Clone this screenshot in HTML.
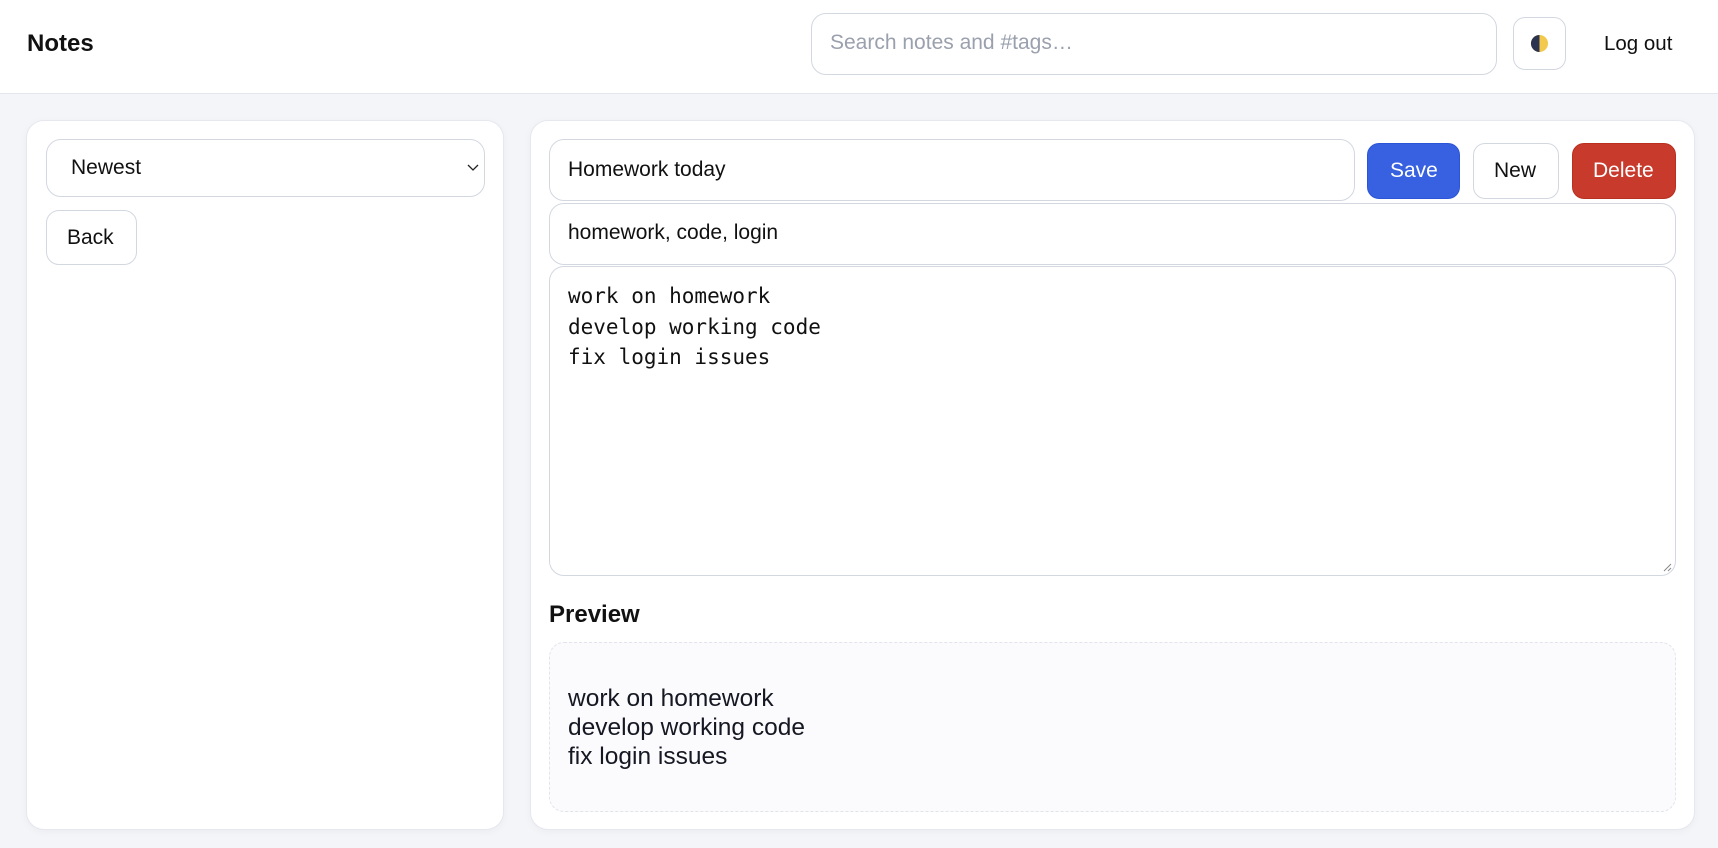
<!DOCTYPE html>
<html><head><meta charset="utf-8"><style>
*{box-sizing:border-box;margin:0;padding:0}
body{width:1718px;height:848px;background:#f4f5f9;font-family:"Liberation Sans",sans-serif;color:#111;position:relative;overflow:hidden}
.hdr{position:absolute;left:0;top:0;width:1718px;height:94px;background:#fff;border-bottom:1px solid #e3e6ee}
.abs{position:absolute}
.box{position:absolute;border:1.5px solid #d3d7e0;border-radius:15px;background:#fff}
.card{position:absolute;background:#fff;border:1px solid #e6e8ef;border-radius:18px;box-shadow:0 2px 8px rgba(0,0,0,.04)}
.t{position:absolute;white-space:nowrap}
</style></head><body>
<div class="hdr"></div>
<div class="t" style="left:27px;top:30px;font-size:24px;font-weight:bold">Notes</div>
<div class="box" style="left:811px;top:13px;width:686px;height:62px;"></div>
<div class="t" style="left:830px;top:31px;font-size:21px;color:#9aa0ad">Search notes and #tags…</div>
<div class="box" style="left:1513px;top:17px;width:53px;height:53px;border-radius:12px"></div>
<svg class="abs" style="left:1530px;top:34px" width="19" height="19" viewBox="0 0 20 20"><circle cx="10" cy="10" r="9" fill="#f2c94c"/><path d="M10 1a9 9 0 0 0 0 18z" fill="#2a3350"/></svg>
<div class="t" style="left:1604px;top:32px;font-size:20.5px">Log out</div>

<div class="card" style="left:26px;top:120px;width:478px;height:710px"></div>
<div class="box" style="left:46px;top:139px;width:439px;height:58px"></div>
<div class="t" style="left:71px;top:156px;font-size:21px">Newest</div>
<svg class="abs" style="left:467px;top:164px" width="12" height="8" viewBox="0 0 12 8"><path d="M1 1l5 5 5-5" fill="none" stroke="#222" stroke-width="1.3"/></svg>
<div class="box" style="left:46px;top:210px;width:91px;height:55px;border-radius:13px"></div>
<div class="t" style="left:67px;top:226px;font-size:21px">Back</div>

<div class="card" style="left:530px;top:120px;width:1165px;height:710px"></div>
<div class="box" style="left:549px;top:139px;width:806px;height:62px"></div>
<div class="t" style="left:568px;top:158px;font-size:21px">Homework today</div>
<div class="box" style="left:1367px;top:143px;width:93px;height:56px;background:#3761e0;border-color:#2b55d6;border-radius:12px"></div>
<div class="t" style="left:1390px;top:159px;font-size:21px;color:#fff">Save</div>
<div class="box" style="left:1473px;top:143px;width:86px;height:56px;border-radius:12px"></div>
<div class="t" style="left:1494px;top:159px;font-size:21px">New</div>
<div class="box" style="left:1572px;top:143px;width:104px;height:56px;background:#c73a2c;border-color:#b8301f;border-radius:12px"></div>
<div class="t" style="left:1593px;top:159px;font-size:21px;color:#fff">Delete</div>
<div class="box" style="left:549px;top:203px;width:1127px;height:62px"></div>
<div class="t" style="left:568px;top:221px;font-size:21px">homework, code, login</div>
<div class="box" style="left:549px;top:266px;width:1127px;height:310px"></div>
<div class="t" style="left:568px;top:281px;font-size:21px;line-height:30.5px;font-family:'DejaVu Sans Mono','Liberation Mono',monospace">work on homework<br>develop working code<br>fix login issues</div>
<svg class="abs" style="left:1662px;top:562px" width="10" height="10"><path d="M2 9L9 2M6 9L9 6" stroke="#888" stroke-width="1"/></svg>
<div class="t" style="left:549px;top:601px;font-size:24px;font-weight:bold">Preview</div>
<div class="abs" style="left:549px;top:642px;width:1127px;height:170px;border:1.5px dashed #e1e4eb;border-radius:15px;background:#fbfbfd"></div>
<div class="t" style="left:568px;top:684px;font-size:24.5px;line-height:29px;color:#151822">work on homework<br>develop working code<br>fix login issues</div>
</body></html>
